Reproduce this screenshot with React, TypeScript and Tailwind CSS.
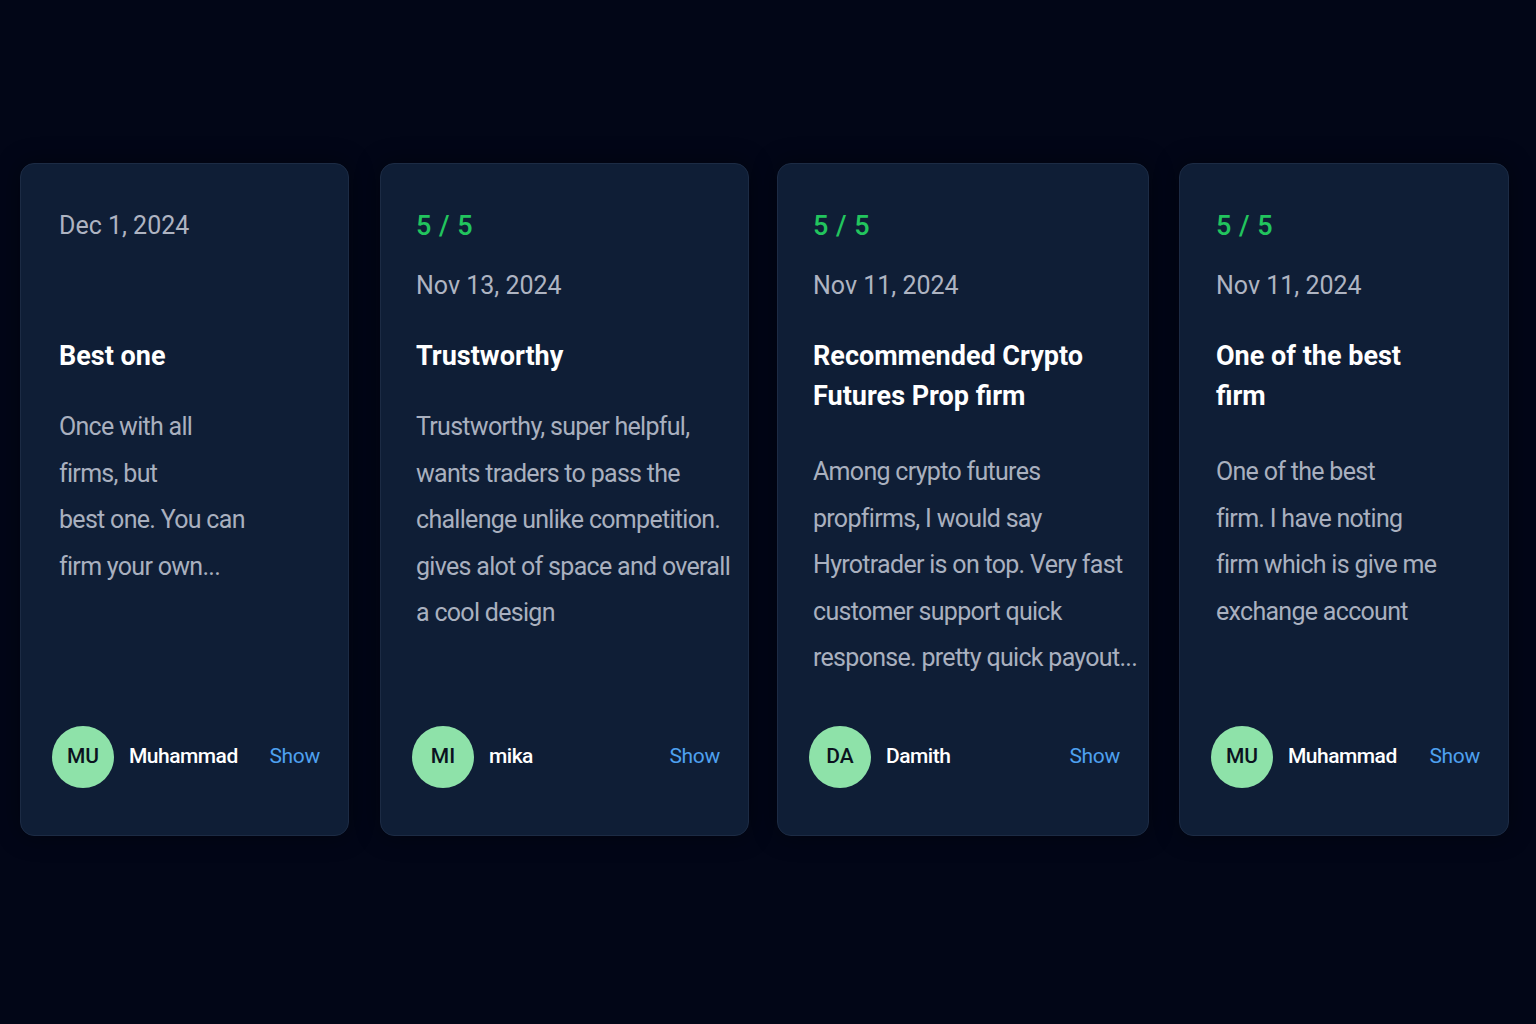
import React from "react";

type Review = {
  rating?: string;
  date: string;
  title: React.ReactNode;
  body: React.ReactNode;
  initials: string;
  name: string;
  w: string;
  px: string;
  bodyMt: string;
};

const reviews: Review[] = [
  {
    date: "Dec 1, 2024",
    title: "Best one",
    body: (
      <>
        Once with all
        <br />
        firms, but
        <br />
        best one. You can
        <br />
        firm your own...
      </>
    ),
    initials: "MU",
    name: "Muhammad",
    w: "w-[329px] mr-[31px]",
    px: "pl-[38px]",
    bodyMt: "mt-[28px]",
  },
  {
    rating: "5 / 5",
    date: "Nov 13, 2024",
    title: "Trustworthy",
    body: (
      <>
        Trustworthy, super helpful,
        <br />
        wants traders to pass the
        <br />
        challenge unlike competition.
        <br />
        gives alot of space and overall
        <br />a cool design
      </>
    ),
    initials: "MI",
    name: "mika",
    w: "w-[369px] mr-[28px]",
    px: "pl-[35px]",
    bodyMt: "mt-[28px]",
  },
  {
    rating: "5 / 5",
    date: "Nov 11, 2024",
    title: (
      <>
        Recommended Crypto
        <br />
        Futures Prop firm
      </>
    ),
    body: (
      <>
        Among crypto futures
        <br />
        propfirms, I would say
        <br />
        Hyrotrader is on top. Very fast
        <br />
        customer support quick
        <br />
        response. pretty quick payout...
      </>
    ),
    initials: "DA",
    name: "Damith",
    w: "w-[372px] mr-[30px]",
    px: "pl-[35px]",
    bodyMt: "mt-[33px]",
  },
  {
    rating: "5 / 5",
    date: "Nov 11, 2024",
    title: (
      <>
        One of the best
        <br />
        firm
      </>
    ),
    body: (
      <>
        One of the best
        <br />
        firm. I have noting
        <br />
        firm which is give me
        <br />
        exchange account
      </>
    ),
    initials: "MU",
    name: "Muhammad",
    w: "w-[330px]",
    px: "pl-[36px]",
    bodyMt: "mt-[33px]",
  },
];

function Card({ r }: { r: Review }) {
  return (
    <div
      className={`${r.w} h-[673px] shrink-0 rounded-[14px] border border-[#1c2b44] bg-[#0f1e36] flex flex-col shadow-[0_0_24px_rgba(0,0,0,0.4)]`}
    >
      <div
        className={`${r.px} pr-[10px] pt-[44px] flex-1 min-h-0 whitespace-nowrap`}
      >
        <div className="h-[128px]">
          {r.rating && (
            <div className="text-[27px] leading-[36px] text-[#22c55e] font-medium tracking-[0.5px]">
              {r.rating}
            </div>
          )}
          <div
            className={`text-[25px] leading-[36px] text-[#aeb4c2] ${
              r.rating ? "mt-[24px]" : ""
            }`}
          >
            {r.date}
          </div>
        </div>
        <div className="text-[27px] leading-[40px] font-bold text-white">
          {r.title}
        </div>
        <div
          className={`${r.bodyMt} text-[25px] leading-[46.5px] text-[#a9b0bf] tracking-[-0.7px]`}
        >
          {r.body}
        </div>
      </div>
      <div className="h-[127px] shrink-0 pl-[31px] pr-[28px] pt-[18px]">
        <div className="flex items-center w-full">
          <div className="w-[62px] h-[62px] rounded-full bg-[#8ee2a9] flex items-center justify-center text-[21px] text-[#0b1220] font-medium">
            {r.initials}
          </div>
          <div className="ml-[15px] text-[21px] tracking-[-0.5px] text-white font-medium">
            {r.name}
          </div>
          <div className="ml-auto text-[21px] tracking-[-0.3px] text-[#4ea1f0]">
            Show
          </div>
        </div>
      </div>
    </div>
  );
}

export default function App() {
  return (
    <div
      className="w-[1536px] h-[1024px] bg-[#020617] overflow-hidden"
      style={{ fontFamily: "Roboto, 'Liberation Sans', sans-serif" }}
    >
      <div className="pt-[163px] pl-[20px] flex">
        {reviews.map((r, i) => (
          <Card key={i} r={r} />
        ))}
      </div>
    </div>
  );
}
